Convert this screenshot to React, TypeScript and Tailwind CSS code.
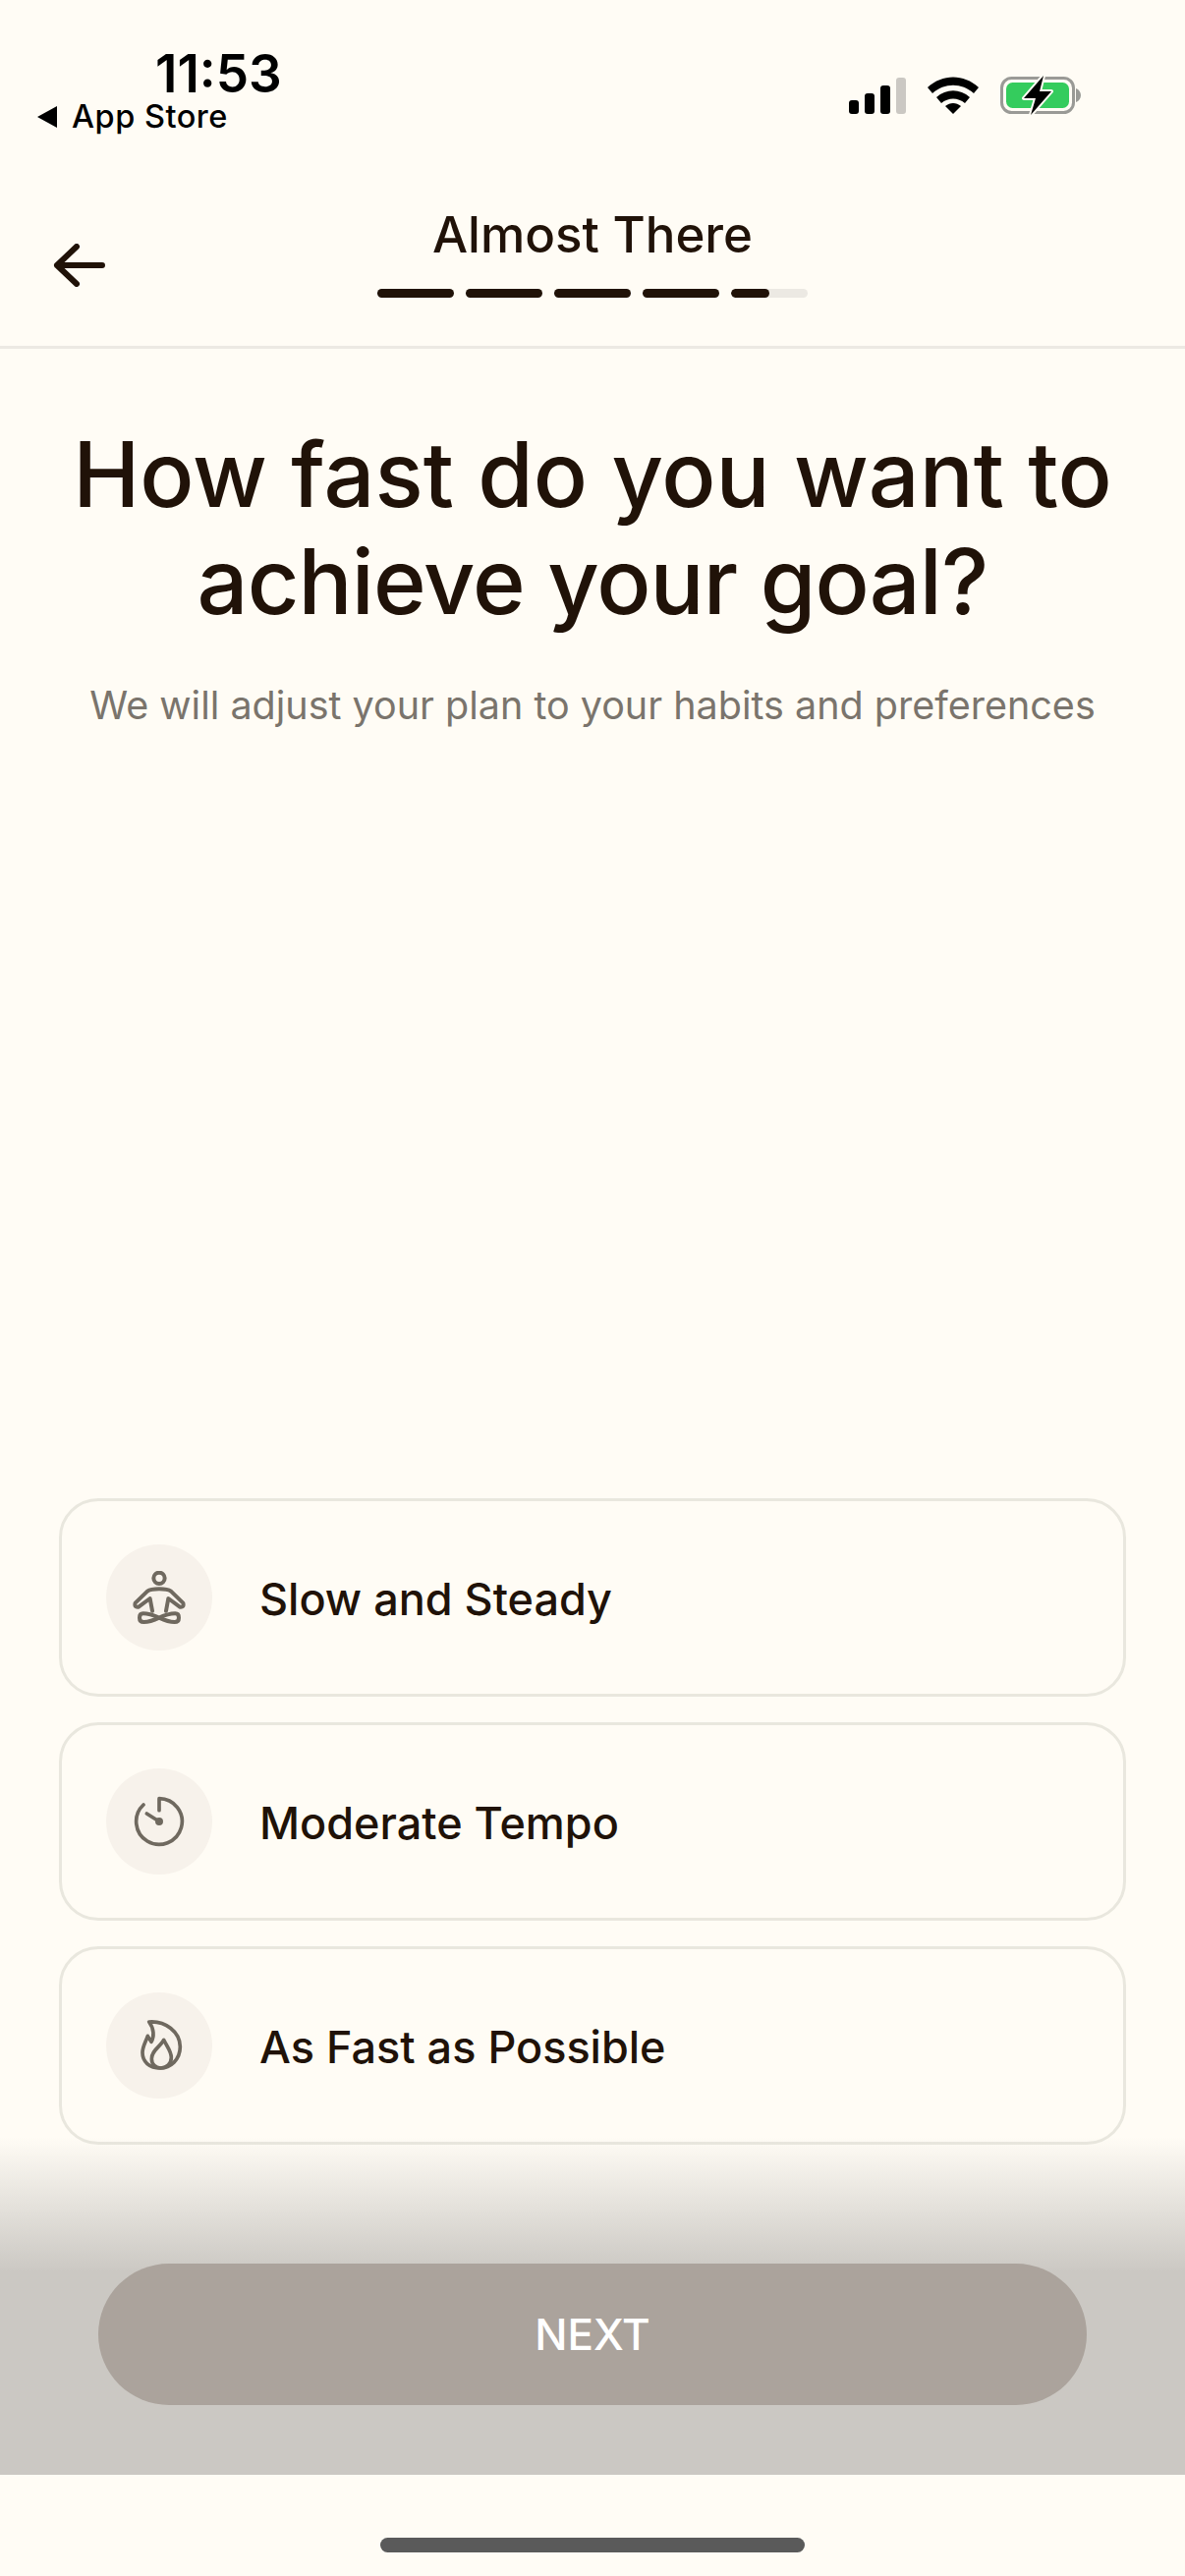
import React from 'react';

const font = { fontFamily: 'Inter, sans-serif' };

const SignalIcon = () => (
  <svg width="58" height="37" viewBox="0 0 58 37">
    <rect x="0" y="23" width="10" height="14" rx="3" fill="#000" />
    <rect x="16" y="16" width="10" height="21" rx="3" fill="#000" />
    <rect x="32" y="8" width="10" height="29" rx="3" fill="#000" />
    <rect x="48" y="0" width="10" height="37" rx="3" fill="#cbc8c3" />
  </svg>
);

const WifiIcon = () => (
  <svg width="52" height="38" viewBox="0 0 52 38">
    <path d="M0 11 C15 -3 37 -3 52 11 L47 17 C35 6 17 6 5 17 Z" fill="#000" />
    <path d="M9 21 C19 12 33 12 43 21 L38 27 C31 21 21 21 14 27 Z" fill="#000" />
    <path d="M18 30 C23 26 29 26 34 30 L26 38 Z" fill="#000" />
  </svg>
);

const BatteryIcon = () => (
  <svg width="82" height="42" viewBox="0 0 82 42">
    <rect x="1.5" y="3.5" width="73" height="35" rx="10" fill="none" stroke="#9a9a96" strokeWidth="3" />
    <rect x="6" y="8" width="64" height="26" rx="6.5" fill="#34cc5d" />
    <path d="M77 14 C80 15 82 18 82 21 C82 24 80 27 77 28 Z" fill="#9a9a96" />
    <path d="M44 1 L24 24 L36 24 L31 41 L52 17 L40 17 Z" fill="#000" stroke="#fffcf5" strokeWidth="4" paintOrder="stroke" strokeLinejoin="round" />
  </svg>
);

const MeditateIcon = () => (
  <svg width="54" height="54" viewBox="0 0 162 162" fill="none" stroke="#6f695f" strokeWidth="12" strokeLinecap="round" strokeLinejoin="round">
    <circle cx="81" cy="22" r="17" />
    <path d="M60 122 L53 84 L18 110 Q4 112 8 98 L45 62 Q55 55 81 55 Q107 55 117 62 L154 98 Q158 112 144 110 L109 84 L102 122" />
    <path d="M81 143 C60 134 45 130 32 130 Q21 130 21 143 Q21 156 34 156 C48 156 62 152 81 143 C100 134 114 130 130 130 Q141 130 141 143 Q141 156 128 156 C114 156 100 152 81 143 Z" />
  </svg>
);

const TempoIcon = () => (
  <svg width="54" height="54" viewBox="0 0 162 162" fill="none" stroke="#6f695f" strokeWidth="11" strokeLinecap="round" strokeLinejoin="round">
    <path d="M81 47 V11 A70 70 0 1 1 33 30" />
    <path d="M43 57 L81 81" />
    <circle cx="81" cy="81" r="7" strokeWidth="10" />
  </svg>
);

const FlameIcon = () => (
  <svg width="54" height="54" viewBox="0 0 162 162" fill="none" stroke="#6f695f" strokeWidth="11" strokeLinecap="round" strokeLinejoin="round">
    <path d="M50 9 C100 5 145 40 145 85 C145 125 115 150 85 150 C50 150 30 130 30 103 C30 85 40 70 46 52 L57 70 C66 55 66 30 50 9 Z" />
    <path d="M95 64 C85 85 58 95 58 122 C58 138 70 150 85 150 C105 150 118 135 118 118 C118 98 105 85 95 64 Z" />
  </svg>
);

const options = [
  { label: 'Slow and Steady', icon: <MeditateIcon /> },
  { label: 'Moderate Tempo', icon: <TempoIcon /> },
  { label: 'As Fast as Possible', icon: <FlameIcon /> },
];

export default function App() {
  return (
    <div className="flex flex-col h-[2622px] w-[1206px] bg-[#fffcf5] text-[#201208] overflow-hidden" style={font}>
      {/* Status bar */}
      <div className="flex justify-between items-start h-[150px] pl-[38px] pr-[106px] pt-[45px] text-black shrink-0">
        <div className="flex flex-col">
          <span className="ml-[120px] text-[53px] leading-[60px] font-semibold">11:53</span>
          <div className="flex items-center gap-[15px] -mt-[6px]">
            <span className="w-0 h-0 border-y-[11px] border-y-transparent border-r-[20px] border-r-black" />
            <span className="text-[32.5px] leading-[40px] font-medium tracking-[0.5px]">App Store</span>
          </div>
        </div>
        <div className="flex items-center gap-[22px] pt-[31px]">
          <SignalIcon />
          <WifiIcon />
          <BatteryIcon />
        </div>
      </div>

      {/* Header */}
      <div className="relative flex flex-col items-center h-[205px] border-b-[3px] border-[#ece9e3] shrink-0 pt-[58px]">
        <svg className="absolute left-[54px] top-[98px]" width="54" height="44" viewBox="0 0 54 44" fill="none" stroke="#201208" strokeWidth="6" strokeLinecap="round" strokeLinejoin="round">
          <path d="M50 22 H4 M24 3 L4 22 L24 41" />
        </svg>
        <h2 className="text-[51px] leading-[62px] font-[450]">Almost There</h2>
        <div className="flex gap-[12px] mt-[24px]">
          {[0, 1, 2, 3].map((i) => (
            <div key={i} className="w-[78px] h-[9px] rounded-full bg-[#201208]" />
          ))}
          <div className="w-[78px] h-[9px] rounded-full bg-[#ece9e3] overflow-hidden">
            <div className="w-[39px] h-full rounded-full bg-[#201208]" />
          </div>
        </div>
      </div>

      {/* Question */}
      <div className="flex flex-col items-center pt-[74px]">
        <h1 className="text-[91.5px] leading-[108.5px] font-medium text-center">
          How fast do you want to<br />
          <span className="tracking-[-0.9px]">achieve your goal?</span>
        </h1>
        <p className="mt-[46px] text-[39.5px] leading-[52px] text-[#7a746c]">We will adjust your plan to your habits and preferences</p>
      </div>

      {/* Options */}
      <div className="flex flex-col gap-[26px] mt-auto mx-[60px]">
        {options.map((o) => (
          <div key={o.label} className="flex items-center h-[202px] pl-[45px] gap-[48px] rounded-[40px] border-[3px] border-[#e9e7de]">
            <div className="flex items-center justify-center w-[108px] h-[108px] rounded-full bg-[#f7f2eb]">{o.icon}</div>
            <span className="pt-[3px] text-[45px] leading-[54px] font-[450]">{o.label}</span>
          </div>
        ))}
      </div>

      {/* Footer */}
      <div className="relative -mt-[8px] h-[344px] shrink-0 px-[100px] pt-[129px] bg-gradient-to-b from-[#cbc8c300] to-[#cbc8c3] to-[40%]">
        <button className="w-full h-[144px] rounded-[72px] bg-[#aba39c] text-white text-[44px] font-medium">NEXT</button>
      </div>
      <div className="flex justify-center h-[103px] pt-[64px] shrink-0">
        <div className="w-[432px] h-[15px] rounded-full bg-[#5a5a5a]" />
      </div>
    </div>
  );
}
